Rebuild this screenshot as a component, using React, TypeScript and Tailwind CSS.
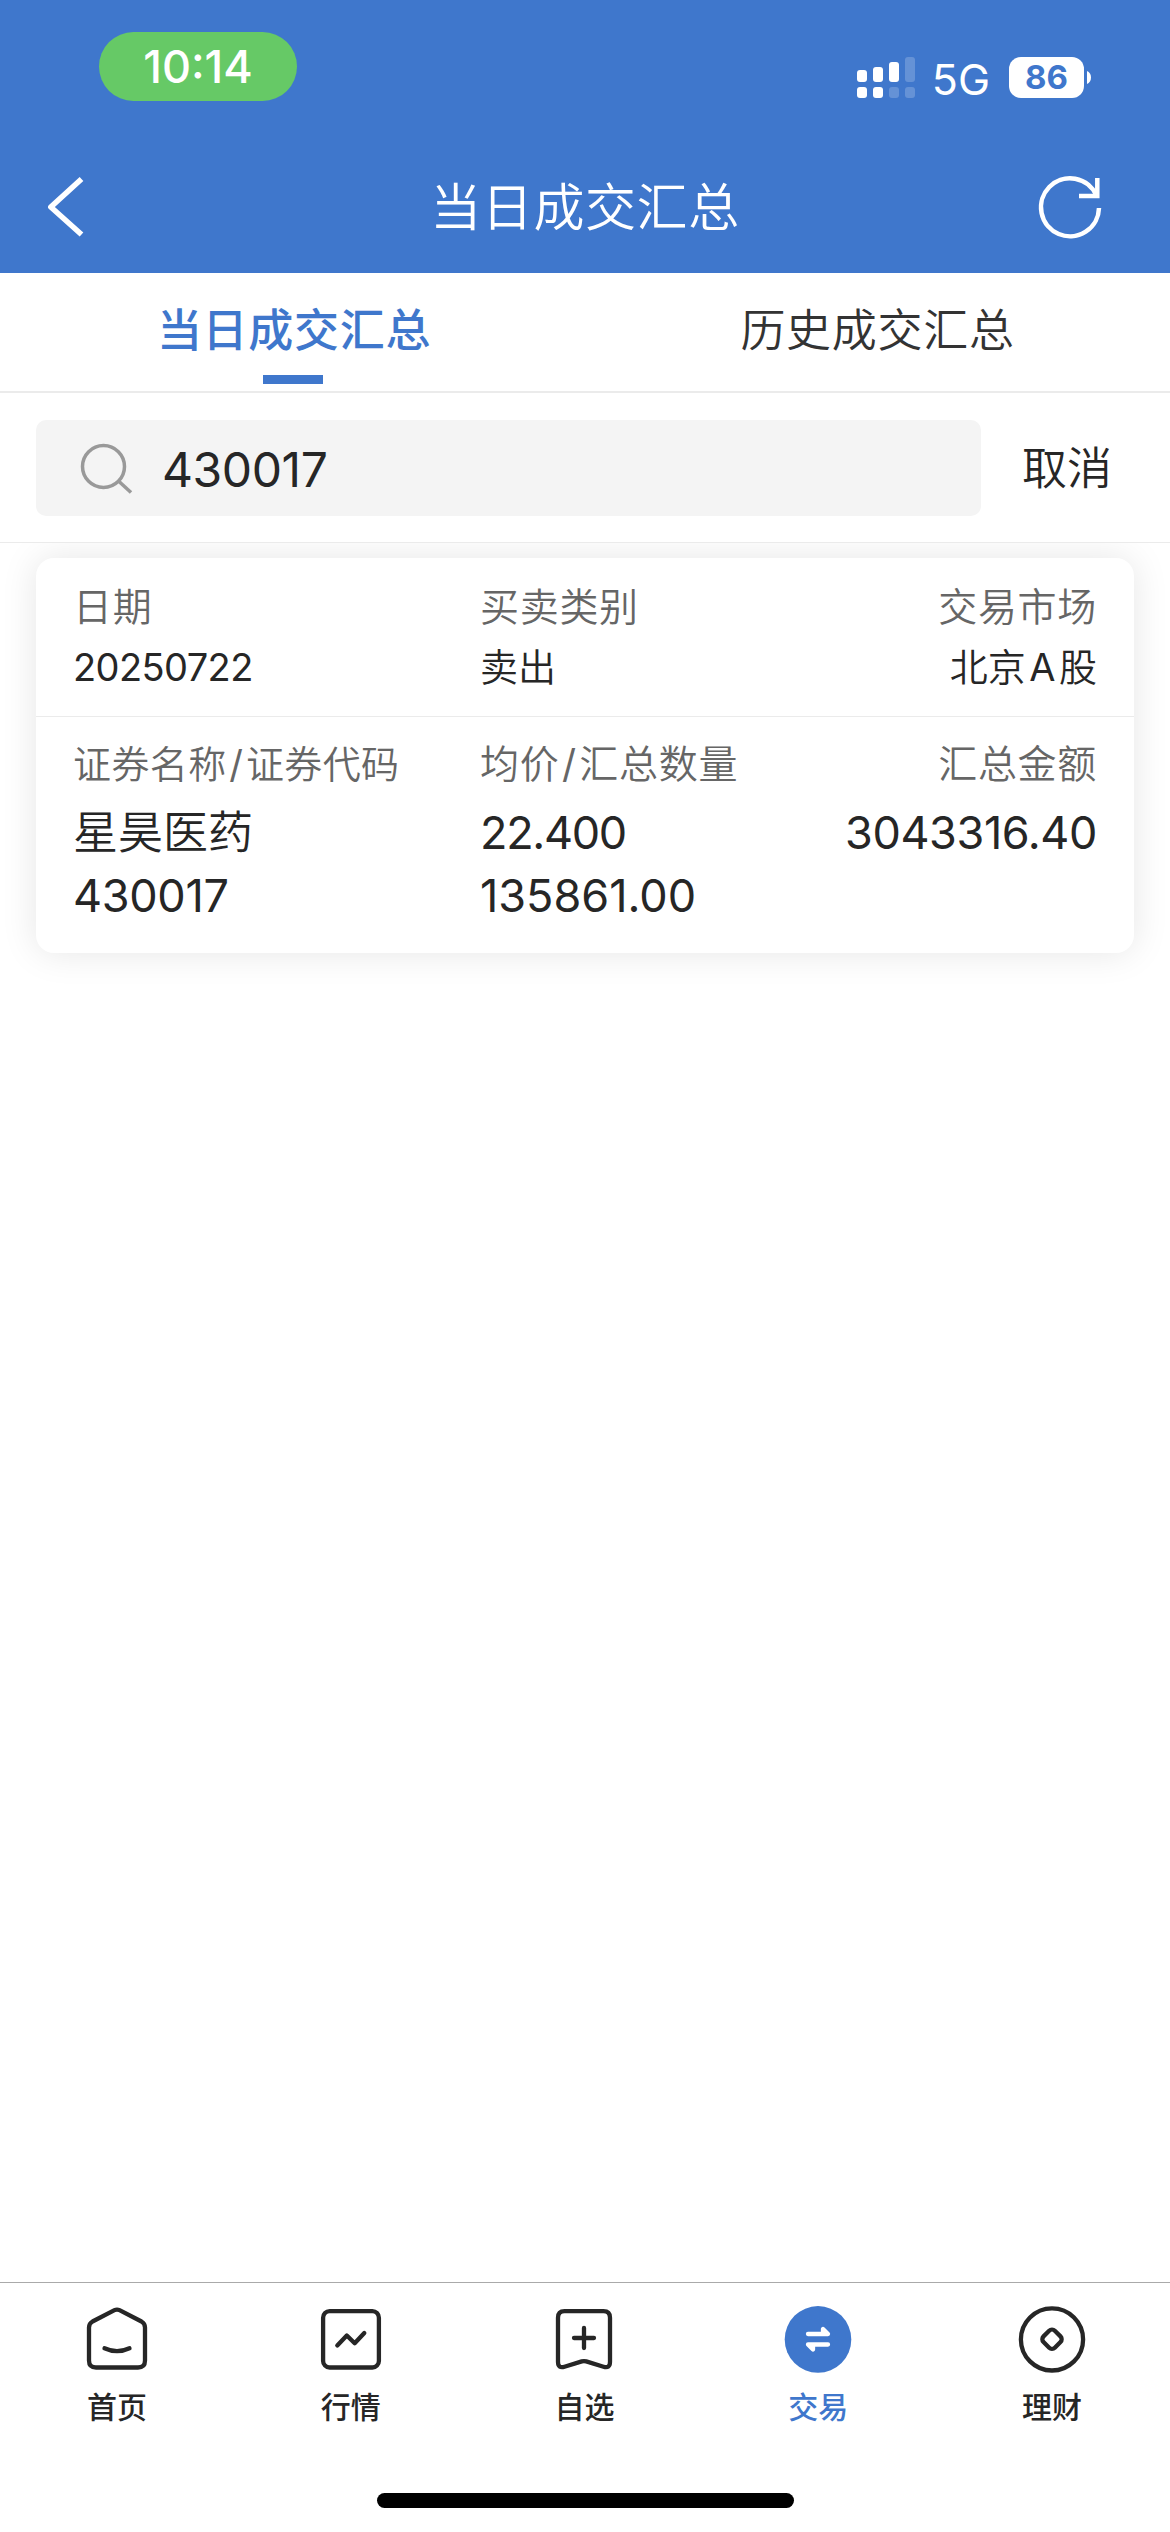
import { ReactNode } from "react";

const LIGHT_CJK = "font-['Inter','Noto_Sans_CJK_SC_DemiLight','Noto_Sans_CJK_SC',sans-serif]";
const MEDIUM_CJK = "font-['Inter','Noto_Sans_CJK_SC',sans-serif] font-medium";

function StatusBar() {
  return (
    <div className="flex h-[141px] items-start justify-between pl-[99px] pr-[79px] text-white">
      <div className="mt-8 flex h-[69px] w-[198px] items-center justify-center rounded-full bg-[#66c966]">
        <span className="text-[45px] font-medium leading-[60px]">10:14</span>
      </div>
      <div className="mt-[57px] flex h-[41px] items-center">
        <svg width="58" height="41" viewBox="0 0 58 41" fill="currentColor">
          <rect x="0" y="13" width="10" height="12" rx="3" />
          <rect x="16" y="10" width="10" height="15" rx="3" />
          <rect x="32" y="5" width="10" height="20" rx="3" />
          <rect x="48" y="0" width="10" height="25" rx="3" opacity="0.2" />
          <rect x="0" y="30" width="10" height="11" rx="3" />
          <rect x="16" y="30" width="10" height="11" rx="3" />
          <rect x="32" y="30" width="10" height="11" rx="3" opacity="0.2" />
          <rect x="48" y="30" width="10" height="11" rx="3" opacity="0.2" />
        </svg>
        <span className="ml-[17px] mt-[3px] text-[43px] leading-[42px]">5G</span>
        <div className="ml-[19px] flex h-[41px] w-[75px] items-center justify-center rounded-xl bg-white">
          <span className="text-[33px] font-bold leading-[41px] text-[#3f77cc]">86</span>
        </div>
        <svg className="ml-[3px]" width="4" height="13" viewBox="0 0 4 13" fill="currentColor">
          <path d="M0 0c2.500 1 4 3.500 4 6.500s-1.500 5.500-4 6.500z" />
        </svg>
      </div>
    </div>
  );
}

function NavBar() {
  return (
    <div className="grid h-[132px] grid-cols-[1fr_auto_1fr] items-center pl-[46px] pr-[67px] text-white">
      <svg width="40" height="62" viewBox="0 0 40 62" fill="none" stroke="currentColor" strokeWidth="5.500" strokeLinejoin="round">
        <path d="M35.500 3L4.800 31L35.500 58.500" />
      </svg>
      <h1 className="ml-[21px] pt-0.5 text-[51px] leading-[60px] tracking-[0.6px]">当日成交汇总</h1>
      <svg className="justify-self-end" width="66" height="66" viewBox="0 0 66 66" fill="none" stroke="currentColor" strokeWidth="4.500">
        <path d="M62 34A29 29 0 1 1 59.500 21.500" />
        <path d="M60.300 4v18h-18.300" />
      </svg>
    </div>
  );
}

type Value = { text: ReactNode; tracking?: string };

function Field({ label, values, big, right, labelClass = "text-[39px] tracking-[0.7px]" }: { label: ReactNode; values: Value[]; big?: boolean; right?: boolean; labelClass?: string }) {
  return (
    <div className={right ? "text-right" : ""}>
      <div className={"whitespace-nowrap leading-[48px] text-[#666] " + labelClass}>{label}</div>
      <div className={big ? "mt-[15px] flex flex-col gap-[3px] text-[45px] leading-[60px]" : "mt-3 text-[38px] leading-[48px]"}>
        {values.map((v, i) => (
          <div key={i} className={v.tracking}>{v.text}</div>
        ))}
      </div>
    </div>
  );
}

const slash = <span className="mx-[2.600px]">/</span>;

function Item({ label, active, children }: { label: string; active?: boolean; children: ReactNode }) {
  return (
    <div className={"flex flex-col items-center " + (active ? "text-[#3f77cc]" : "text-[#262626]")}>
      <svg width="68" height="68" viewBox="0 0 68 68" fill="none" stroke="currentColor" strokeWidth="4.300" strokeLinecap="round" strokeLinejoin="round">
        {children}
      </svg>
      <span className={"mt-[13px] text-[30px] leading-10 " + MEDIUM_CJK}>{label}</span>
    </div>
  );
}

export default function App() {
  return (
    <div className={`flex h-[2532px] w-[1170px] flex-col bg-white text-[#262626] ${LIGHT_CJK}`}>
      <header className="bg-[#3f77cc]">
        <StatusBar />
        <NavBar />
      </header>
      <div className="grid h-[120px] grid-cols-2 border-b-2 border-[#ebebeb] pt-7 text-[45px] leading-[60px] tracking-[0.7px]">
        <div className={"flex flex-col items-center text-[#3f77cc] " + MEDIUM_CJK}>
          <span className="ml-[3px]">当日成交汇总</span>
          <div className="mt-[14px] h-[9px] w-[60px] bg-[#3f77cc]" />
        </div>
        <div className="flex flex-col items-center text-[#333]">
          <span>历史成交汇总</span>
        </div>
      </div>
      <div className="relative z-10 flex h-[150px] items-start border-b border-[#ebebeb] bg-white pl-9 pt-[27px]">
        <div className="flex h-24 w-[945px] items-center rounded-[10px] bg-[#f4f4f4] pl-[44px]">
          <svg width="54" height="52" viewBox="0 0 54 52" fill="none" stroke="#999" strokeWidth="3.500">
            <circle cx="23.500" cy="24.500" r="21" />
            <path d="M38.500 39L51 50.500" />
          </svg>
          <span className="ml-[28px] pt-[3px] text-[48px] leading-[60px] tracking-[-0.4px]">430017</span>
        </div>
        <span className="ml-[41px] mt-[19px] text-[45px] leading-[60px]">取消</span>
      </div>
      <div className="mx-9 mt-[15px] h-[395px] rounded-[18px] bg-white shadow-[0_0_36px_rgba(0,0,0,0.1)]">
        <div className="grid h-[159px] grid-cols-[407px_300px_1fr] border-b border-[#ebebeb] px-[37px] pt-[25px]">
          <Field label="日期" values={[{ text: "20250722", tracking: "tracking-[-0.6px]" }]} />
          <Field label="买卖类别" values={[{ text: "卖出" }]} />
          <Field
            label="交易市场"
            values={[{ text: <>北京<span className="mx-[3.500px]">A</span>股</> }]}
            right
          />
        </div>
        <div className="grid grid-cols-[407px_300px_1fr] px-[37px] pt-[23px]">
          <Field
            label={<>证券名称{slash}证券代码</>}
            values={[{ text: "星昊医药" }, { text: "430017", tracking: "tracking-[-0.3px]" }]}
            labelClass="text-[38px] tracking-[0.4px]"
            big
          />
          <Field
            label={<>均价{slash}汇总数量</>}
            values={[{ text: "22.400", tracking: "tracking-[-1.300px]" }, { text: "135861.00" }]}
            big
          />
          <Field label="汇总金额" values={[{ text: "3043316.40", tracking: "tracking-[-0.4px]" }]} big right />
        </div>
      </div>
      <main className="flex-1" />
      <nav className="flex h-[250px] flex-col items-center border-t border-[#aaa]">
        <div className="grid w-[1169px] grid-cols-5 self-start pt-[23px]">
          <Item label="首页">
            <path d="M31.500 4.200q2.500-1.300 5 0L58.500 15.500q3.500 2 3.500 6v33q0 7-7 7h-42q-7 0-7-7v-33q0-4 3.500-6z" />
            <path d="M21.500 42.300q12.500 5.800 25 0" />
          </Item>
          <Item label="行情">
            <rect x="6.100" y="5.200" width="55.800" height="56.300" rx="6.500" />
            <path d="M20.300 39.500L29.800 29.500L37.700 37.300L47.300 27" />
          </Item>
          <Item label="自选">
            <path d="M14.500 5.200h39q6.500 0 6.500 6.500v44q0 7-6.500 5l-17.300-5.300q-2.200-.7-4.400 0l-17.300 5.300q-6.500 2-6.500-5v-44q0-6.500 6.500-6.500z" />
            <path d="M24 32h20M34 22v20" />
          </Item>
          <Item label="交易" active>
            <circle cx="34" cy="33.400" r="33.300" fill="currentColor" stroke="none" />
            <path d="M24 28h20l-5-5v5zM44 38.500h-20l5 5v-5z" stroke="#fff" fill="#fff" />
          </Item>
          <Item label="理财">
            <circle cx="34" cy="33.400" r="31.100" />
            <rect x="26" y="25.200" width="16" height="16" rx="4" transform="rotate(45 34 33.200)" />
          </Item>
        </div>
        <div className="mt-[66px] h-[15px] w-[417px] rounded-full bg-black" />
      </nav>
    </div>
  );
}
